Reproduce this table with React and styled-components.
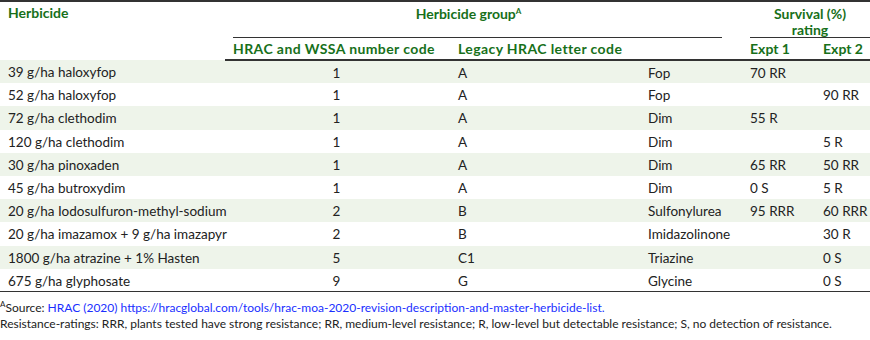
import React from 'react';
import styled, { createGlobalStyle } from 'styled-components';

const GlobalStyle = createGlobalStyle`
  body {
    margin: 0;
    background: #ffffff;
    font-family: 'Lato', 'Liberation Sans', sans-serif;
    color: #222222;
  }
`;

const Wrapper = styled.div`
  width: 870px;
`;

const Table = styled.table`
  width: 870px;
  border-collapse: collapse;
  table-layout: fixed;
  border-top: 2px solid #333333;
  border-bottom: 1.5px solid #333333;
  font-size: 13.5px;
`;

const HeadCell = styled.th`
  color: #17701a;
  font-weight: 700;
  font-size: 14px;
  letter-spacing: ${props => props.wide ? '0.4px' : '0'};
  vertical-align: top;
  text-align: ${props => props.align || 'left'};
  padding: ${props => props.pad || '0 0 0 8px'};
  line-height: 16px;
  white-space: nowrap;
`;

const SubHeadRow = styled.tr`
  height: 22px;

  th {
    vertical-align: middle;
    border-bottom: 2px solid #333333;
  }
`;

const GroupLabel = styled.div`
  height: 32px;
  box-sizing: border-box;
  border-bottom: 1px solid #333333;
  text-align: center;
  padding-right: ${props => props.shift || 0}px;
`;

const Sup = styled.sup`
  font-size: 8px;
  line-height: 0;
  vertical-align: 5px;
  font-weight: ${props => (props.light ? 400 : 700)};
`;

const BodyRow = styled.tr`
  height: 23.2px;
  background: ${props => (props.shaded ? '#eef4ea' : '#ffffff')};
`;

const Cell = styled.td`
  padding: 1px 0 0 ${props => props.pl || 8}px;
  text-align: ${props => props.align || 'left'};
  line-height: 16px;
  white-space: nowrap;
`;

const Notes = styled.div`
  margin-top: 8px;
  font-size: 12px;
  line-height: 16px;
  color: #222222;
  white-space: nowrap;
`;

const Link = styled.span`
  color: #1a2fff;
`;

const rows = [
  ['39 g/ha haloxyfop', '1', 'A', 'Fop', '70 RR', ''],
  ['52 g/ha haloxyfop', '1', 'A', 'Fop', '', '90 RR'],
  ['72 g/ha clethodim', '1', 'A', 'Dim', '55 R', ''],
  ['120 g/ha clethodim', '1', 'A', 'Dim', '', '5 R'],
  ['30 g/ha pinoxaden', '1', 'A', 'Dim', '65 RR', '50 RR'],
  ['45 g/ha butroxydim', '1', 'A', 'Dim', '0 S', '5 R'],
  ['20 g/ha Iodosulfuron-methyl-sodium', '2', 'B', 'Sulfonylurea', '95 RRR', '60 RRR'],
  ['20 g/ha imazamox + 9 g/ha imazapyr', '2', 'B', 'Imidazolinone', '', '30 R'],
  ['1800 g/ha atrazine + 1% Hasten', '5', 'C1', 'Triazine', '', '0 S'],
  ['675 g/ha glyphosate', '9', 'G', 'Glycine', '', '0 S'],
];

export default function App() {
  return (
    <Wrapper>
      <GlobalStyle />
      <Table>
        <colgroup>
          <col style={{ width: 225 }} />
          <col style={{ width: 215 }} />
          <col style={{ width: 200 }} />
          <col style={{ width: 102 }} />
          <col style={{ width: 73 }} />
          <col style={{ width: 55 }} />
        </colgroup>
        <thead>
          <tr>
            <HeadCell rowSpan={2} pad="3px 0 0 8px">Herbicide</HeadCell>
            <HeadCell colSpan={3} pad="4px 20px 0 8px">
              <GroupLabel shift={18}>
                Herbicide group<Sup>A</Sup>
              </GroupLabel>
            </HeadCell>
            <HeadCell colSpan={2} pad="4px 0 0 8px">
              <GroupLabel>
                Survival (%)
                <br />
                rating
              </GroupLabel>
            </HeadCell>
          </tr>
          <SubHeadRow>
            <HeadCell align="center" pad="0 8px" wide>HRAC and WSSA number code</HeadCell>
            <HeadCell pad="0 0 0 18px" wide>Legacy HRAC letter code</HeadCell>
            <HeadCell />
            <HeadCell>Expt 1</HeadCell>
            <HeadCell>Expt 2</HeadCell>
          </SubHeadRow>
        </thead>
        <tbody>
          {rows.map((r, i) => (
            <BodyRow key={i} shaded={i % 2 === 0}>
              <Cell>{r[0]}</Cell>
              <Cell align="center" pl={0}>{r[1]}</Cell>
              <Cell pl={18}>{r[2]}</Cell>
              <Cell>{r[3]}</Cell>
              <Cell>{r[4]}</Cell>
              <Cell>{r[5]}</Cell>
            </BodyRow>
          ))}
        </tbody>
      </Table>
      <Notes>
        <div>
          <Sup light>A</Sup>Source:{' '}
          <Link>HRAC (2020) https://hracglobal.com/tools/hrac-moa-2020-revision-description-and-master-herbicide-list.</Link>
        </div>
        <div>
          Resistance-ratings: RRR, plants tested have strong resistance; RR, medium-level resistance; R, low-level but detectable resistance; S, no detection of resistance.
        </div>
      </Notes>
    </Wrapper>
  );
}
